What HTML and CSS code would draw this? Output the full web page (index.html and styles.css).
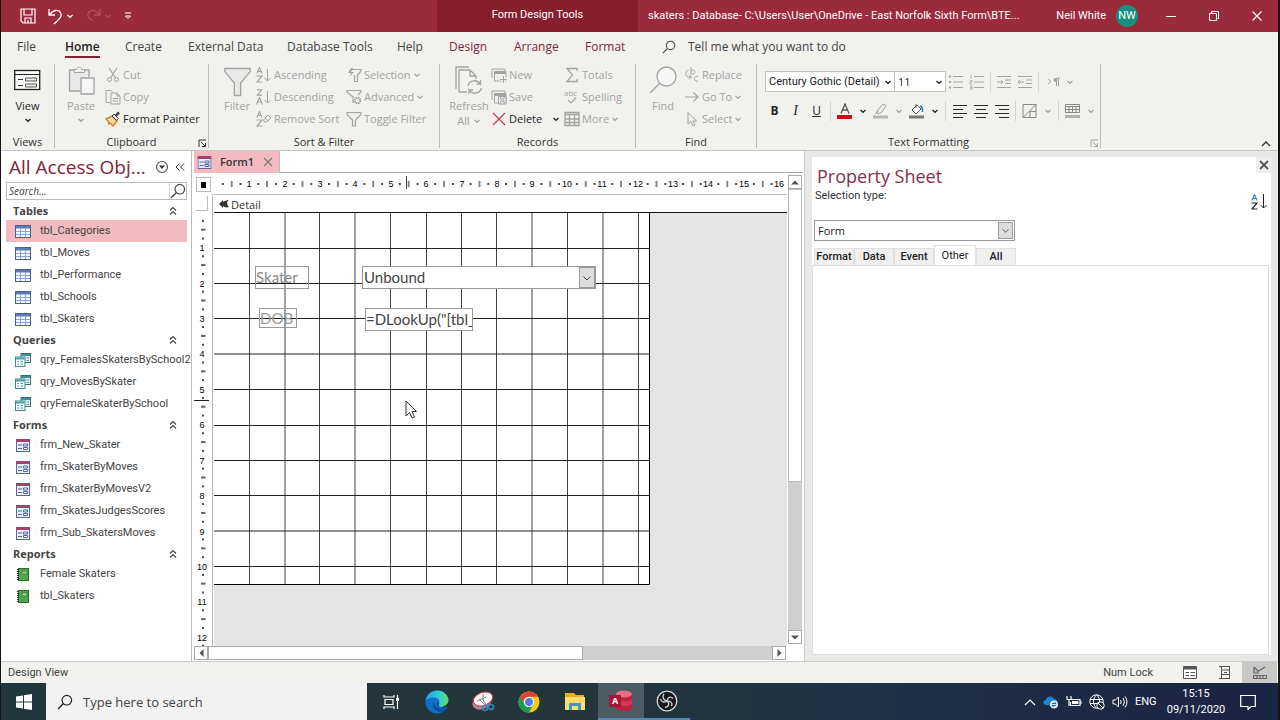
FILE: index.html
```html
<!DOCTYPE html>
<html lang="en">
<head>
<meta charset="utf-8">
<title>skaters : Database</title>
<link rel="stylesheet" href="styles.css">
</head>
<body>
<svg class="defs" aria-hidden="true">
  <symbol id="chev" viewBox="0 0 8 8"><path d="M1.500 3 4 5.300 6.500 3" fill="none" stroke="currentColor" stroke-width="1.300"/></symbol>
  <symbol id="fold" viewBox="0 0 8 10"><path d="M1 4.500 4 1.500 7 4.500M1 8.500 4 5.500 7 8.500" fill="none" stroke="currentColor" stroke-width="1.200"/></symbol>
  <symbol id="mag" viewBox="0 0 16 16"><path d="M6.200 9.800 1 15" fill="none" stroke="currentColor" stroke-width="1.300"/><circle cx="9.800" cy="6.200" r="4.800" fill="none" stroke="currentColor" stroke-width="1.200"/></symbol>
  <symbol id="funnel" viewBox="0 0 26 28"><path d="M.8 1H25.200V4L16 15V27H10V15L.8 4Z" fill="#e9e9e9" stroke="currentColor" stroke-width="1.300"/></symbol>
  <symbol id="funnel-small" viewBox="0 0 16 16"><path d="M1 1.500H15V3.500L9.500 9V15H6.500V9L1 3.500Z" fill="#ececec" stroke="currentColor" stroke-width="1.200"/></symbol>
  <symbol id="launch" viewBox="0 0 9 9"><path d="M1 8V1H8M3 3 7 7M7.500 4V7.500H4" fill="none" stroke="currentColor"/></symbol>
  <symbol id="table" viewBox="0 0 16 13"><rect x=".5" y=".5" width="15" height="12" fill="#f4f9ff" stroke="#47628e"/><path d="M1 1H15V3.500H1Z" fill="#5b7db4"/><path d="M1 6.500H15M1 9.500H15M5.500 3V12M10.500 3V12" stroke="#8aa7d2"/></symbol>
  <symbol id="query" viewBox="0 0 16 14"><rect x="6" y=".5" width="9.500" height="9" fill="#e9f6f5" stroke="#2e7379"/><path d="M6 1H15V3H6Z" fill="#3f9195"/><rect x=".5" y="4" width="9.500" height="9.500" fill="#eefafa" stroke="#3f8b92"/><path d="M1 4.500H9.500V6.500H1Z" fill="#4fa3a6"/><path d="M2.500 8.500H4M5.500 8.500H8M2.500 11H4M5.500 11H8M11.500 5H14M11.500 7.500H14" stroke="#5d8fa9"/></symbol>
  <symbol id="form" viewBox="0 0 14 13"><rect x=".5" y=".5" width="13" height="12" fill="#e4edfa" stroke="#5a6796"/><path d="M0 0H14V3H0Z" fill="#a8406c"/><path d="M2 6H6M2 9.500H6" stroke="#56658f"/><path d="M7.500 5H11.500V7H7.500ZM7.500 8.500H11.500V10.500H7.500Z" fill="#fff" stroke="#4b66a8"/></symbol>
  <symbol id="report" viewBox="0 0 12 13"><rect x="1.500" y=".5" width="10" height="12" fill="#4fa64c" stroke="#2d6b32"/><rect x="5" y="3" width="5" height="3" fill="#9bd38e" stroke="#3c803d" stroke-width=".8"/><path d="M1 1V13" stroke="#333" stroke-width="2" stroke-dasharray="1 1"/></symbol>
  <symbol id="sheets" viewBox="0 0 16 14"><path d="M1 10V1H14V3M3.500 12V3.500H15V13H3.500Z" fill="#eee" stroke="currentColor"/><path d="M3.500 5H15" stroke="currentColor" stroke-width="2"/></symbol>
  <symbol id="glyph-a" viewBox="0 0 7 8"><path d="M.5 7.500 3.500.5 6.500 7.500M1.500 5H5.500" fill="none" stroke="currentColor" stroke-width="1.200"/></symbol>
  <symbol id="glyph-z" viewBox="0 0 7 8"><path d="M.5 1H6L1 7H6.500" fill="none" stroke="currentColor" stroke-width="1.200"/></symbol>
</svg>

<header class="titlebar">
  <div class="quick">
    <button aria-label="Save"><svg width="16" height="16"><path d="M1 1H15V15H3L1 13ZM4 1V7H12V1M5 15V10H11V15M8 12V15" fill="none" stroke="currentColor" stroke-width="1.200"/></svg></button>
    <button aria-label="Undo"><svg width="15" height="17"><path d="M1 1V7H7M1.500 6.500C5 2 10 1 12.500 4.500 15 8.500 11 11 6 16" fill="none" stroke="currentColor" stroke-width="1.300"/></svg><svg width="8" height="8"><use href="#chev"/></svg></button>
    <button class="faded" aria-label="Redo" disabled><svg width="15" height="17"><path d="M14 1V7H8M13.500 6.500C10 2 5 1 2.500 4.500 0 8.500 4 11 7 13" fill="none" stroke="currentColor" stroke-width="1.300"/></svg><svg width="8" height="8"><use href="#chev"/></svg></button>
    <button aria-label="Customize toolbar"><svg width="8" height="8"><path d="M1 1H7M1.500 4 4 6.500 6.500 4Z" fill="none" stroke="currentColor"/></svg></button>
  </div>
  <div class="context">Form Design Tools</div>
  <h1 class="doc">skaters : Database- C:\Users\User\OneDrive - East Norfolk Sixth Form\BTE...</h1>
  <div class="user"><span>Neil White</span><span class="avatar">NW</span></div>
  <div class="winbtns">
    <button aria-label="Minimize"><svg width="10" height="10"><path d="M0 5.500H10" stroke="currentColor"/></svg></button>
    <button aria-label="Restore"><svg width="10" height="10"><path d="M.5 2.500H7.500V9.500H.5ZM2.500 2V.5H9.500V7.500H8" fill="none" stroke="currentColor"/></svg></button>
    <button aria-label="Close"><svg width="10" height="10"><path d="M.5.5 9.500 9.500M9.500.5.5 9.500" stroke="currentColor" stroke-width="1.200"/></svg></button>
  </div>
</header>

<nav class="tabs">
  <button>File</button><button class="current"><span>Home</span></button><button>Create</button><button>External Data</button><button>Database Tools</button><button>Help</button><button class="tool">Design</button><button class="tool">Arrange</button><button class="tool">Format</button>
  <button class="tell"><svg width="14" height="14" viewBox="0 0 16 16"><use href="#mag"/></svg><span>Tell me what you want to do</span></button>
</nav>

<section class="ribbon">
  <div class="group g-views">
    <div class="cmds"><button class="big on"><svg width="27" height="28"><rect x=".7" y="4.500" width="25" height="19" fill="#fff" stroke="#222" stroke-width="1.300"/><path d="M1 8.500H26" stroke="#222"/><path d="M4 13.500H9M4 19.500H9" stroke="#333"/><path d="M11.500 12H22.500V15H11.500ZM11.500 18H22.500V21H11.500Z" fill="#eee" stroke="#555"/></svg><span>View</span><svg class="drop" width="8" height="8"><use href="#chev"/></svg></button></div>
    <h2>Views</h2>
  </div>
  <div class="group g-clip">
    <div class="cmds">
      <button class="big" disabled><svg width="27" height="29"><path d="M12 25H1.500V4H21V11" fill="#e9e9e9" stroke="currentColor" stroke-width="1.300"/><path d="M6 6.500V3.500H8.500C9 .5 13.500.5 14 3.500H16.500V6.500Z" fill="#f1f1ee" stroke="currentColor"/><path d="M13 12H26V28H13Z" fill="#f6f6f6" stroke="currentColor" stroke-width="1.300"/></svg><span>Paste</span><svg class="drop" width="8" height="8"><use href="#chev"/></svg></button>
      <div class="stack">
        <button disabled><svg width="16" height="16"><path d="M4 1 10.500 11M12 1 5.500 11" fill="none" stroke="currentColor" stroke-width="1.200"/><circle cx="4.500" cy="12.500" r="2" fill="none" stroke="currentColor"/><circle cx="11.500" cy="12.500" r="2" fill="none" stroke="currentColor"/></svg>Cut</button>
        <button disabled><svg width="16" height="16"><path d="M5 13.500H1V1.500H6L8 3.500M6 4H12L15 7V15H6Z M12 4V7H15M8 9.500H13M8 12H13" fill="none" stroke="currentColor"/></svg>Copy</button>
        <button class="on"><svg width="16" height="16"><path d="M1 8 7 5 12 10 8 15 5 12 4 13 3 10Z" fill="#f7d9a8" stroke="#d9801f" stroke-width="1.400"/><path d="M7 5 9 3 13.500 7.500 11.500 9.500Z" fill="#ddd" stroke="#444"/><path d="M11 4.500 14 1.500" stroke="#444" stroke-width="2.500"/></svg>Format Painter</button>
      </div>
    </div>
    <h2>Clipboard</h2><button class="launcher" aria-label="Clipboard options"><svg width="9" height="9"><use href="#launch"/></svg></button>
  </div>
  <div class="group g-sort">
    <div class="cmds">
      <button class="big" disabled><svg width="27" height="28"><use href="#funnel"/></svg><span>Filter</span></button>
      <div class="stack">
        <button disabled><svg width="16" height="16"><use href="#glyph-a" width="7" height="7"/><use href="#glyph-z" y="8" width="7" height="8"/><path d="M11.500 2V14M8.500 11 11.500 14 14.500 11" fill="none" stroke="currentColor"/></svg>Ascending</button>
        <button disabled><svg width="16" height="16"><use href="#glyph-z" width="7" height="7"/><use href="#glyph-a" y="8" width="7" height="8"/><path d="M11.500 2V14M8.500 11 11.500 14 14.500 11" fill="none" stroke="currentColor"/></svg>Descending</button>
        <button disabled><svg width="16" height="16"><use href="#glyph-a" width="7" height="7"/><use href="#glyph-z" y="8" width="7" height="8"/><path d="M7.500 9 12 4 15 7 10.500 11H8.500ZM9.500 7 12 10" fill="none" stroke="currentColor"/></svg>Remove Sort</button>
      </div>
      <div class="stack">
        <button disabled><svg width="16" height="16"><path d="M6 2.500H15V4L11.500 8V14.500H8.500V8" fill="none" stroke="currentColor" stroke-width="1.200"/><path d="M5 1 2 6H5L3 10 8 5H5L7 1Z" fill="currentColor"/></svg>Selection<svg width="8" height="8"><use href="#chev"/></svg></button>
        <button disabled><svg width="16" height="16"><path d="M7 14V8L1 3V1.500H15V3L12 6" fill="none" stroke="currentColor" stroke-width="1.200"/><circle cx="11.500" cy="11.500" r="2.800" fill="none" stroke="currentColor" stroke-width="2" stroke-dasharray="1.600 .6"/></svg>Advanced<svg width="8" height="8"><use href="#chev"/></svg></button>
        <button disabled><svg width="16" height="16"><use href="#funnel-small"/></svg>Toggle Filter</button>
      </div>
    </div>
    <h2>Sort &amp; Filter</h2>
  </div>
  <div class="group g-rec">
    <div class="cmds">
      <button class="big" disabled><svg width="28" height="29"><path d="M1 23V1H14M4 26V4H15L21 10V13M15 4V10H21M4 26H12" fill="none" stroke="currentColor" stroke-width="1.300"/><path d="M13 20C14 14 22 13 25.500 18V14M25.500 18H21.500M26.500 22C25 28 17 29 14 24V28M14 24H18" fill="none" stroke="currentColor" stroke-width="1.300"/></svg><span>Refresh</span><span class="inl">All<svg width="8" height="8"><use href="#chev"/></svg></span></button>
      <div class="stack">
        <button disabled><svg width="16" height="16"><use href="#sheets"/><path d="M12.500 8V16M8.500 12H16" stroke="#f1f1ee" stroke-width="3"/><path d="M12.500 9V16M9 12.500H16" stroke="currentColor"/></svg>New</button>
        <button disabled><svg width="16" height="16"><use href="#sheets"/><path d="M7.500 7.500H15V15H7.500ZM9.500 15V12H13V15M9.500 8V10H13V8" fill="#eee" stroke="currentColor"/></svg>Save</button>
        <button class="on"><svg width="16" height="16"><path d="M2 2 14 14M14 2 2 14" stroke="#cc4257" stroke-width="1.400"/></svg>Delete<svg class="wide" width="8" height="8"><use href="#chev"/></svg></button>
      </div>
      <div class="stack">
        <button disabled><svg width="16" height="16"><path d="M13 4V1.500H3L8.500 8 3 14.500H13V12" fill="none" stroke="currentColor" stroke-width="1.300"/></svg>Totals</button>
        <button disabled><svg width="16" height="16"><text class="mark" x="0" y="7">abc</text><path d="M4 11 7 14 12 8.500" fill="none" stroke="currentColor" stroke-width="1.200"/></svg>Spelling</button>
        <button disabled><svg width="16" height="16"><path d="M1 1.500H15V14.500H1ZM1 3.500H15M1 8H15M1 11.500H15M5.500 4V14M10.500 4V14" fill="none" stroke="currentColor" stroke-width="1.300"/></svg>More<svg width="8" height="8"><use href="#chev"/></svg></button>
      </div>
    </div>
    <h2>Records</h2>
  </div>
  <div class="group g-find">
    <div class="cmds">
      <button class="big" disabled><svg width="28" height="28"><path d="M10.500 17.500 1 27" stroke="currentColor" stroke-width="1.400"/><circle cx="17.500" cy="10.500" r="9.500" fill="#f5f5f5" stroke="currentColor" stroke-width="1.300"/></svg><span>Find</span></button>
      <div class="stack">
        <button disabled><svg width="16" height="16"><path d="M7 0V7H8.500A2 2 0 1 0 7 4.500M14 9.500A2.500 2.500 0 1 0 14 14" fill="none" stroke="currentColor"/><path d="M5 3C1 3 1 9 4 10H7M5 7.500 7.500 10 5 12.500" fill="none" stroke="currentColor"/></svg>Replace</button>
        <button disabled><svg width="16" height="16"><path d="M1 8H14M9.500 3.500 14 8 9.500 12.500" fill="none" stroke="currentColor" stroke-width="1.200"/></svg>Go To<svg width="8" height="8"><use href="#chev"/></svg></button>
        <button disabled><svg width="16" height="16"><path d="M4 1.500V13L7 10.500 9 15 11 14 9 10H12.500Z" fill="none" stroke="currentColor"/></svg>Select<svg width="8" height="8"><use href="#chev"/></svg></button>
      </div>
    </div>
    <h2>Find</h2>
  </div>
  <div class="group g-text">
    <div class="lines">
      <div class="line">
        <label class="pick font"><select aria-label="Font"><option>Century Gothic (Detail)</option></select><svg width="8" height="8"><use href="#chev"/></svg></label>
        <label class="pick size"><select aria-label="Font size"><option>11</option></select><svg width="8" height="8"><use href="#chev"/></svg></label>
        <div class="fmt lists">
          <button disabled aria-label="Bullets"><svg width="16" height="16"><path d="M5 2.500H15M5 8H15M5 13.500H15" stroke="currentColor"/><path d="M1 2.500H3M1 8H3M1 13.500H3" stroke="currentColor" stroke-width="2"/></svg></button>
          <button disabled aria-label="Numbering"><svg width="16" height="16"><path d="M5 2.500H15M5 8H15M5 13.500H15" stroke="currentColor"/><path d="M2 .5V4.500M1 6.500H3V8H1V10H3M1 12H3V15H1M1 13.500H3" fill="none" stroke="currentColor" stroke-width=".8"/></svg></button>
          <i></i>
          <button disabled aria-label="Increase indent"><svg width="16" height="16"><path d="M1 2.500H15M9 6H15M9 9.500H15M1 13.500H15M1 8H7M5 6 7 8 5 10" fill="none" stroke="currentColor"/></svg></button>
          <button disabled aria-label="Decrease indent"><svg width="16" height="16"><path d="M1 2.500H15M9 6H15M9 9.500H15M1 13.500H15M1 8H7M3 6 1 8 3 10" fill="none" stroke="currentColor"/></svg></button>
          <i></i>
          <button class="dir" disabled aria-label="Text direction"><svg width="14" height="12"><path d="M1 3 4 5.500 1 8M9.500 10V2H13M11.500 2V10" fill="none" stroke="currentColor"/><circle cx="8.500" cy="4" r="2" fill="currentColor"/></svg><svg width="8" height="8"><use href="#chev"/></svg></button>
        </div>
      </div>
      <div class="line fmt second">
        <button class="on b" aria-label="Bold">B</button><button class="on it" aria-label="Italic">I</button><button class="on u" aria-label="Underline">U</button><i></i>
        <button class="on" aria-label="Font color"><svg width="16" height="16"><path d="M4 10.500 8 1 12 10.500M5.500 7H10.500" fill="none" stroke="#555" stroke-width="1.300"/><path d="M0 12H15V16H0Z" fill="#cc1014"/></svg><svg width="8" height="8"><use href="#chev"/></svg></button>
        <button disabled aria-label="Highlight"><svg width="16" height="16"><path d="M4 8 10 1 13 2.500 9 9 5 11ZM2 11 5 8" fill="#eee" stroke="currentColor"/><path d="M0 12.500H15V15.500H0Z" fill="#b5b5b5"/></svg><svg width="8" height="8"><use href="#chev"/></svg></button>
        <button class="on" aria-label="Fill color"><svg width="16" height="16"><path d="M3 7 8 2 12 6 7 11ZM7 1V5" fill="#fff" stroke="#555"/><path d="M11 3C14 4 13.500 7 13.500 9" fill="none" stroke="#3778bd" stroke-width="1.600"/><path d="M0 12.500H15V15.500H0Z" fill="#777"/></svg><svg width="8" height="8"><use href="#chev"/></svg></button><i></i>
        <button class="on" aria-label="Align left"><svg width="14" height="16"><path d="M0 2.500H14M0 6.500H10M0 10.500H14M0 14.500H10" stroke="currentColor" stroke-width="1.200"/></svg></button>
        <button class="on" aria-label="Center"><svg width="14" height="16"><path d="M0 2.500H14M2 6.500H12M0 10.500H14M2 14.500H12" stroke="currentColor" stroke-width="1.200"/></svg></button>
        <button class="on" aria-label="Align right"><svg width="14" height="16"><path d="M0 2.500H14M4 6.500H14M0 10.500H14M4 14.500H14" stroke="currentColor" stroke-width="1.200"/></svg></button><i></i>
        <button disabled aria-label="Gridlines"><svg width="16" height="16"><path d="M1 1.500H14V14.500H1ZM1 14.500 14 1.500M8 8.500H14M8 8.500V14" fill="none" stroke="#888"/></svg><svg width="8" height="8"><use href="#chev"/></svg></button><i></i>
        <button disabled aria-label="Alternate row color"><svg width="16" height="16"><path d="M.5 1.500H14.500V9.500H.5ZM.5 3.500H14.500M.5 6.500H14.500M4 3V9M7.500 3V9M11 3V9" fill="none" stroke="#888"/><path d="M0 12H15V15H0Z" fill="#b0b0b0"/></svg><svg width="8" height="8"><use href="#chev"/></svg></button>
      </div>
    </div>
    <h2>Text Formatting</h2><button class="launcher" aria-label="Text formatting options" disabled><svg width="9" height="9"><use href="#launch"/></svg></button>
  </div>
  <button class="collapse" aria-label="Collapse ribbon"><svg width="10" height="8"><path d="M1 6 5 2 9 6" fill="none" stroke="currentColor" stroke-width="1.300"/></svg></button>
</section>

<main class="work">
  <aside class="objects">
    <div class="objhead"><h2>All Access Obj...</h2>
      <button aria-label="Filter objects"><svg width="14" height="14"><circle cx="7" cy="7" r="5.500" fill="none" stroke="#555" stroke-width="1.200"/><path d="M4 5.500H10L7 9Z" fill="#333"/></svg></button>
      <button aria-label="Collapse pane"><svg width="10" height="10"><path d="M4.500 1.500 1 5 4.500 8.500M9 1.500 5.500 5 9 8.500" fill="none" stroke="#333"/></svg></button></div>
    <div class="find"><input type="text" placeholder="Search..." aria-label="Search objects"><button aria-label="Search"><svg width="16" height="16"><use href="#mag"/></svg></button></div>
    <h3>Tables<svg width="8" height="10"><use href="#fold"/></svg></h3>
    <ul>
      <li class="sel"><svg width="16" height="13"><use href="#table"/></svg>tbl_Categories</li>
      <li><svg width="16" height="13"><use href="#table"/></svg>tbl_Moves</li>
      <li><svg width="16" height="13"><use href="#table"/></svg>tbl_Performance</li>
      <li><svg width="16" height="13"><use href="#table"/></svg>tbl_Schools</li>
      <li><svg width="16" height="13"><use href="#table"/></svg>tbl_Skaters</li>
    </ul>
    <h3>Queries<svg width="8" height="10"><use href="#fold"/></svg></h3>
    <ul>
      <li><svg width="16" height="14"><use href="#query"/></svg>qry_FemalesSkatersBySchool2</li>
      <li><svg width="16" height="14"><use href="#query"/></svg>qry_MovesBySkater</li>
      <li><svg width="16" height="14"><use href="#query"/></svg>qryFemaleSkaterBySchool</li>
    </ul>
    <h3>Forms<svg width="8" height="10"><use href="#fold"/></svg></h3>
    <ul>
      <li><svg width="14" height="13"><use href="#form"/></svg>frm_New_Skater</li>
      <li><svg width="14" height="13"><use href="#form"/></svg>frm_SkaterByMoves</li>
      <li><svg width="14" height="13"><use href="#form"/></svg>frm_SkaterByMovesV2</li>
      <li><svg width="14" height="13"><use href="#form"/></svg>frm_SkatesJudgesScores</li>
      <li><svg width="14" height="13"><use href="#form"/></svg>frm_Sub_SkatersMoves</li>
    </ul>
    <h3>Reports<svg width="8" height="10"><use href="#fold"/></svg></h3>
    <ul>
      <li><svg width="12" height="13"><use href="#report"/></svg>Female Skaters</li>
      <li><svg width="12" height="13"><use href="#report"/></svg>tbl_Skaters</li>
    </ul>
  </aside>

  <section class="designer">
    <div class="doctabs"><button class="doctab"><svg width="15" height="13" viewBox="0 0 14 13"><use href="#form"/></svg><span>Form1</span><svg width="12" height="12"><path d="M2 2 10 10M10 2 2 10" stroke="#777" stroke-width="1.200"/></svg></button></div>
    <div class="corner"><span></span></div>
    <svg class="hruler" height="16">
      <defs><pattern id="ht" x="0" y="0" width="35.400" height="16" patternUnits="userSpaceOnUse"><path d="M8.800 7V9M26.500 7V9" stroke="#111" stroke-width="1.500"/><path d="M17.700 5V11" stroke="#333" stroke-width="1.200"/></pattern></defs>
      <rect width="100%" height="16" fill="url(#ht)"/>
      <g class="nums"><text x="35" y="11">1</text><text x="71" y="11">2</text><text x="106" y="11">3</text><text x="141" y="11">4</text><text x="177" y="11">5</text><text x="212" y="11">6</text><text x="248" y="11">7</text><text x="283" y="11">8</text><text x="318" y="11">9</text><text x="353" y="11">10</text><text x="388" y="11">11</text><text x="424" y="11">12</text><text x="459" y="11">13</text><text x="494" y="11">14</text><text x="530" y="11">15</text><text x="565" y="11">16</text></g>
      <path d="M192.500 0V13" stroke="#444"/>
    </svg>
    <svg class="vruler" width="19">
      <defs><pattern id="vt" x="0" y="18" width="19" height="35.400" patternUnits="userSpaceOnUse"><path d="M8 8.800H10M8 26.500H10" stroke="#111" stroke-width="1.500"/><path d="M7 17.700H11.500" stroke="#111" stroke-width="1.300"/></pattern></defs>
      <rect y="18" width="19" height="100%" fill="url(#vt)"/>
      <path d="M2 16.500H13.500V2" fill="none" stroke="#bbb"/>
      <g class="nums"><text x="8" y="57">1</text><text x="8" y="93">2</text><text x="8" y="128">3</text><text x="8" y="163">4</text><text x="8" y="199">5</text><text x="8" y="234">6</text><text x="8" y="270">7</text><text x="8" y="305">8</text><text x="8" y="341">9</text><text x="8" y="376">10</text><text x="8" y="411">11</text><text x="8" y="447">12</text></g>
      <path d="M0 206.500H15" stroke="#222"/>
    </svg>
    <div class="sheet">
      <div class="band"><svg width="10" height="9"><path d="M0 4 4 0V2C5 1 8 0 10 0 7 2 8 5 10 7 7 8 5 7 4 6V8Z" fill="#333"/></svg>Detail</div>
      <div class="canvas">
        <div class="page">
          <svg class="grid" width="436" height="372">
            <path d="M35.500 0V371M71 0V371M105.500 0V371M141 0V371M176.500 0V371M212.500 0V371M247.500 0V371M282.500 0V371M318 0V371M353.500 0V371M389 0V371M424.500 0V371" stroke="#444"/>
            <path d="M0 35.500H436M0 70.500H436M0 105.500H436M0 141H436M0 176.500H436M0 212.500H436M0 247.500H436M0 282.500H436M0 318H436M0 353.500H436" stroke="#222"/>
            <path d="M435.500 0V371.500H0" fill="none" stroke="#000"/>
          </svg>
          <div class="ctl lbl-skater">Skater</div>
          <div class="ctl combo">Unbound<button aria-label="Open list"><svg width="12" height="12" viewBox="0 0 12 12"><path d="M2.500 4.500 6 8 9.500 4.500" fill="none" stroke="currentColor"/></svg></button></div>
          <div class="ctl lbl-dob">DOB</div>
          <div class="ctl lookup">=DLookUp("[tbl_</div>
          <svg class="pointer" width="12" height="19"><path d="M1 1V16L4.500 12.500 7 18 9.500 17 7 11.500H11.500Z" fill="#fff" stroke="#333"/></svg>
        </div>
      </div>
    </div>
    <div class="vscroll"><button aria-label="Scroll up"><svg width="8" height="5"><path d="M0 4.500 4 .5 8 4.500Z" fill="#555"/></svg></button><span class="thumb"></span><button aria-label="Scroll down"><svg width="8" height="5"><path d="M0 .5H8L4 4.500Z" fill="#555"/></svg></button></div>
    <div class="hscroll"><button aria-label="Scroll left"><svg width="5" height="8"><path d="M4.500 0V8L.5 4Z" fill="#555"/></svg></button><span class="thumb"></span><button aria-label="Scroll right"><svg width="5" height="8"><path d="M.5 0V8L4.500 4Z" fill="#555"/></svg></button></div>
  </section>

  <aside class="props">
    <div class="prophead"><h2>Property Sheet</h2><button aria-label="Close property sheet"><svg width="12" height="12"><path d="M2 2 10 10M10 2 2 10" stroke="#555" stroke-width="1.800"/></svg></button></div>
    <div class="seltype"><span>Selection type:</span><button aria-label="Sort"><svg width="16" height="16"><use class="blue" href="#glyph-a" width="7" height="7"/><use href="#glyph-z" y="8" width="7" height="8"/><path d="M12.500 0V14M9.500 11 12.500 14 15.500 11" fill="none" stroke="#222"/></svg></button></div>
    <label class="pick selection"><select aria-label="Selection"><option>Form</option></select><svg width="15" height="17" viewBox="0 0 15 17"><path d="M4 7 7.500 10.500 11 7" fill="none" stroke="#444"/></svg></label>
    <div class="proptabs"><button>Format</button><button>Data</button><button>Event</button><button class="open">Other</button><button>All</button></div>
    <div class="propbody"></div>
  </aside>
</main>

<footer class="status"><span>Design View</span><span class="lock">Num Lock</span>
  <button aria-label="Form view"><svg width="14" height="13"><path d="M.5.5H13.500V12.500H.5Z" fill="#fff" stroke="#555"/><path d="M1 2H13" stroke="#555" stroke-width="3"/><path d="M2.500 6.500H6M2.500 9.500H6M7.500 6.500H12M7.500 9.500H12" stroke="#555"/></svg></button>
  <button aria-label="Layout view"><svg width="12" height="13"><path d="M0 .5H11M0 12.500H11M2.500 1V12M10.500 1V12M3 4H10M3 8.500H10M5 6.500H8" fill="none" stroke="#555"/></svg></button>
  <button class="active" aria-label="Design view"><svg width="14" height="13"><path d="M1 1V7H6M4 6 12 1M.5 9.500H13.500V12.500H.5ZM4 10V12M7 10V12M10 10V12M1 1 5 5" fill="none" stroke="#666" stroke-width="1.200"/></svg></button>
</footer>

<footer class="taskbar">
  <button class="start" aria-label="Start"><svg width="16" height="16"><path d="M0 2.500 7 1.500V7.500H0ZM8 1.300 16 0V7.500H8ZM0 8.500H7V14.500L0 13.500ZM8 8.500H16V16L8 14.700Z" fill="#fff"/></svg></button>
  <div class="tsearch"><svg width="16" height="16"><use href="#mag"/></svg><input type="text" placeholder="Type here to search" aria-label="Type here to search"></div>
  <button class="views" aria-label="Task View"><svg width="16" height="14"><path d="M1 0V2H11V0M1 14V12H11V14M2 4.500H10V9.500H2ZM14.500 0V14" fill="none" stroke="#fff" stroke-width="1.200"/><path d="M13 3H16V6H13Z" fill="#fff"/></svg></button>
  <button aria-label="Edge"><svg width="24" height="24" viewBox="0 0 24 24"><defs><linearGradient id="eg" x2="1"><stop stop-color="#1f9fe4"/><stop offset=".6" stop-color="#32cdd5"/><stop offset="1" stop-color="#63db63"/></linearGradient></defs><circle cx="12" cy="12" r="11.500" fill="#0f6fc6"/><path d="M.6 11C1.500 4 7 .5 12 .5 19 .5 23.500 5.500 23.500 10.500 23.500 15 20 17 16.500 17 14 17 13 15.500 14 14 16 10 12 7.500 8.500 7.500 5 7.500 2 9 .6 11Z" fill="url(#eg)"/><path d="M9 12C6 17 11 22 16 22.500 19 21.500 21 20 22 17.500 17 20 10 19 9 12Z" fill="#0c4f9f"/><path d="M13 12C11 16 15 19 21 17L24 17C25 14 24 10 24 10 23 15 18 17 16.500 17 14 17 13 15.500 14 14Z" fill="#22363f"/></svg></button>
  <button aria-label="Snipping tool"><svg width="24" height="22"><ellipse cx="11" cy="11" rx="10" ry="7" transform="rotate(-25 11 11)" fill="#b98790"/><ellipse cx="12" cy="8" rx="10" ry="6.500" transform="rotate(-20 12 8)" fill="#f5f5f7" stroke="#c9354d"/><path d="M6 10 15 6M12 3V9L16 15M8 8 14 14" stroke="#888" fill="none"/><circle cx="14" cy="17" r="2.500" fill="none" stroke="#3786b8" stroke-width="1.500"/><circle cx="20" cy="16" r="2.500" fill="none" stroke="#3786b8" stroke-width="1.500"/></svg></button>
  <button aria-label="Chrome"><svg width="22" height="22" viewBox="0 0 22 22"><circle cx="11" cy="11" r="10.500" fill="#fbc719"/><path d="M1.900 5.700A10.500 10.500 0 0 1 20 5.700H11A5 5 0 0 0 6.500 13.500Z" fill="#dc4437"/><path d="M1.900 5.700A10.500 10.500 0 0 0 11 21.500L15.400 13.500A5 5 0 0 1 6.500 13.500Z" fill="#179d59"/><circle cx="11" cy="11" r="5" fill="#fff"/><circle cx="11" cy="11" r="3.900" fill="#467fe9"/></svg></button>
  <button aria-label="File Explorer"><svg width="22" height="20"><path d="M1 1H10L12 3H20V17H1Z" fill="#e8ae27"/><path d="M1 5H21V18H1Z" fill="#fbdc70"/><path d="M5 11H17V18H14V14H8V18H5Z" fill="#4295cc"/></svg></button>
  <button class="running" aria-label="Access"><svg width="24" height="22"><path d="M7 3V18C9 22 22 22 23 18V3Z" fill="#b9213f"/><path d="M7 9C12 12 19 12 23 9V14C19 17 12 17 7 14Z" fill="#cf3755"/><ellipse cx="15" cy="4" rx="8" ry="3.500" fill="#e66d87"/><rect x="0" y="5" width="12" height="12" rx="1" fill="#a91535"/><text class="acc" x="6" y="14">A</text></svg></button>
  <button class="under" aria-label="OBS"><svg width="22" height="22"><circle cx="11" cy="11" r="9.800" fill="#181a1e" stroke="#d8dadc" stroke-width="1.300"/><path d="M11 11C7 10 6 7 8 4M11 11C11.500 7 14.500 6 17 8.500M11 11C14 13.500 13 17 9 17.500M11 11C8 13 5 12 4.500 9M11 11C15 11 17 13 15.500 16" fill="none" stroke="#c9cbce" stroke-width="1.400"/></svg></button>
  <div class="tray">
    <svg width="12" height="8"><path d="M1 7 6 2 11 7" fill="none" stroke="#fff" stroke-width="1.200"/></svg>
    <svg width="16" height="14"><path d="M3 10C-1 9 0 5 3 5 4 1 9 0 11 4 14 4 15 7 14 9L10 11Z" fill="#1f83d5"/><circle cx="11" cy="9.500" r="4" fill="#d9eef9"/><path d="M9 8.500H13L11.500 7M13 10.500H9L10.500 12" fill="none" stroke="#1c6fb0"/></svg>
    <svg width="16" height="14"><path d="M5.500 4.500H14V10.500H4.500V7M1 1V4.500H5V1M3 4V11" fill="none" stroke="#fff" stroke-width="1.200"/><path d="M6 6H12.500V9H6ZM14.500 6H15.500V9H14.500Z" fill="#fff"/></svg>
    <svg width="16" height="16"><circle cx="7.500" cy="7.500" r="6.700" fill="none" stroke="#fff"/><path d="M1 5.500H14M1 9.500H9M7.500 1C3.500 4 3.500 11 7.500 14M7.500 1C10 3 10.500 5 10.500 8" fill="none" stroke="#fff"/><circle cx="11.500" cy="11.500" r="3.700" fill="#1c3041" stroke="#fff"/><path d="M9 9 14 14" stroke="#fff"/></svg>
    <svg width="16" height="14"><path d="M1 5V9H3.500L6.500 12V2L3.500 5ZM8.500 5Q10 7 8.500 9M11 3Q14 7 11 11M13 1.500Q17 7 13 12.500" fill="none" stroke="#fff"/></svg>
    <span class="lang">ENG</span>
    <div class="clock"><span>15:15</span><span>09/11/2020</span></div>
    <svg width="16" height="16"><path d="M.7 1.500H15.300V12.500H11L8 15.500V12.500H.7Z" fill="none" stroke="#fff" stroke-width="1.200"/></svg>
  </div>
</footer>
</body>
</html>
```
FILE: styles.css
```css
* { box-sizing: border-box; }
body { margin: 0; min-height: 100vh; display: flex; flex-direction: column; background: #e8e8e6; color: #333; font: 11px/16px "Open Sans", "Noto Sans", sans-serif; border-left: 1px solid #151515; border-right: 2px solid #151515; }
button { margin: 0; padding: 0; border: 0; background: none; font: inherit; color: inherit; display: flex; align-items: center; justify-content: center; white-space: nowrap; }
h1, h2, h3, ul { margin: 0; padding: 0; font-weight: 400; font-size: 11px; list-style: none; }
svg { flex: none; }
select, input { font: inherit; color: inherit; border: 0; padding: 0; background: none; border-radius: 0; min-width: 0; outline: 0; }
select { appearance: none; width: 100%; }
.defs { position: absolute; width: 0; height: 0; }

.titlebar { display: grid; grid-template-columns: 436px 201px minmax(0, 1fr) auto auto; align-items: center; height: 32px; background: #9b2b3a; color: #fff; }
.quick { display: flex; align-items: center; gap: 12px; padding-left: 19px; }
.quick button { gap: 3px; }
.quick .faded { color: #b54c5b; }
.context { align-self: stretch; background: #871f2d; text-align: center; line-height: 30px; font-family: Roboto, sans-serif; }
.doc { padding-left: 10px; white-space: nowrap; overflow: hidden; text-overflow: ellipsis; font-family: Roboto, sans-serif; }
.user { display: flex; align-items: center; gap: 10px; font: 11px/16px Roboto, sans-serif; }
.avatar { width: 22px; height: 22px; border-radius: 50%; background: #168f80; line-height: 22px; text-align: center; }
.winbtns { display: flex; padding-left: 11px; }
.winbtns button { width: 43px; height: 32px; }

.tabs { display: grid; grid-template-columns: 48px 60px 63px 99px 110px 52px 65px 71px 77px 1fr; height: 30px; padding-left: 16px; background: #f1f1ee; font-size: 12px; color: #444; }
.tabs button { justify-content: flex-start; height: 29px; }
.tabs .current { color: #222; font-weight: 600; }
.tabs .current span { border-bottom: 2px solid #871f2d; line-height: 18px; margin-top: 2px; }
.tabs .tool { color: #85243a; }
.tabs .tell { gap: 12px; }

.ribbon { display: flex; height: 89px; padding: 2px 0; background: #f1f1ee; border-bottom: 1px solid #c6c6c4; color: #333; }
.ribbon button:disabled { color: #a3a3a3; }
.ribbon .on { color: #262626; }
.group { position: relative; display: flex; flex-direction: column; justify-content: space-between; border-right: 1px solid #bdbdbb; }
.group h2 { line-height: 12px; text-align: center; }
.launcher { position: absolute; right: 1px; bottom: 0; }
.cmds { display: grid; height: 68px; }
.big { flex-direction: column; justify-content: flex-start; padding-top: 2px; line-height: 15px; }
.big > svg:first-child { height: 32px; }
.drop { margin-top: 3px; }
.inl { display: flex; align-items: center; gap: 3px; }
.stack { display: grid; grid-auto-rows: 22px; }
.stack button { justify-content: flex-start; gap: 2px; }
.stack .wide { margin-left: 8px; }
.mark { font: 8px/8px "Open Sans", sans-serif; fill: currentColor; }
.g-views { width: 54px; }
.g-clip { width: 154px; }
.g-clip .cmds { grid-template-columns: 48px 1fr; padding-left: 2px; }
.g-sort { width: 231px; }
.g-sort .cmds { grid-template-columns: 38px 90px 1fr; padding-left: 9px; }
.g-rec { width: 196px; }
.g-rec .cmds { grid-template-columns: 44px 73px 1fr; padding-left: 7px; }
.g-find { width: 121px; }
.g-find .cmds { grid-template-columns: 42px 1fr; padding-left: 6px; }
.g-text { width: 344px; }
.lines { padding: 7px 0 0 8px; }
.line { display: flex; align-items: center; }
.pick { position: relative; display: flex; align-items: center; height: 21px; background: #fff; border: 1px solid #c4c4c2; color: #222; }
.pick select { padding-left: 3px; }
.pick svg { position: absolute; right: 2px; pointer-events: none; }
.font { width: 130px; font-family: Roboto, sans-serif; }
.size { width: 51px; border-left: 0; }
.fmt { display: flex; align-items: center; }
.lists { gap: 5px; padding-left: 2px; }
.fmt i { width: 1px; height: 20px; background: #d4d4d2; }
.dir { gap: 5px; padding-left: 3px; }
.second { height: 30px; gap: 6px; margin-top: 4px; padding-left: 2px; }
.second button { gap: 6px; height: 20px; min-width: 15px; font-size: 12px; }
.b { font-weight: 700; }
.second .it { font-style: italic; font-family: "Liberation Serif", serif; font-size: 14px; }
.u { text-decoration: underline; }
.collapse { margin-left: auto; align-self: flex-end; padding-right: 7px; }

.work { flex: 1; display: grid; grid-template-columns: 191px 613px minmax(0, 1fr); }
.objects { background: #fff; border-right: 1px solid #bbb; padding: 3px 4px 0 5px; color: #444; }
.objhead { display: flex; align-items: center; gap: 6px; height: 28px; padding: 0 2px 2px 0; }
.objhead h2 { font-size: 19px; line-height: 26px; color: #7d2638; flex: 1; padding-left: 3px; white-space: nowrap; }
.find { display: flex; width: 181px; height: 18px; margin-bottom: 1px; border: 1px solid #bbb; }
.find input { flex: 1; padding-left: 2px; font-size: 10px; font-style: italic; }
.find input::placeholder { color: #444; opacity: 1; }
.find button { width: 17px; border-left: 1px solid #ddd; }
.objects h3 { display: flex; justify-content: space-between; align-items: center; height: 19px; padding: 0 10px 0 7px; font-size: 11px; font-weight: 700; }
.objects li { display: flex; align-items: center; height: 22px; gap: 9px; padding-left: 9px; white-space: nowrap; font-family: Roboto, sans-serif; }
.objects li svg { width: 16px; }
.objects .sel { background: #f3bac1; }

.designer { display: grid; grid-template: 22px 21px minmax(0, 1fr) 15px / 20px minmax(0, 1fr) 16px; padding: 0 1px 0 2px; background: #fff; border-right: 1px solid #ccc; }
.doctabs { grid-column: 1 / -1; border-bottom: 1px solid #aaa; display: flex; }
.doctab { gap: 8px; width: 86px; height: 22px; padding-right: 2px; background: #f3bac1; font-weight: 600; border-right: 1px solid #bbb; }
.corner { margin: 4px 3px 2px 2px; border: 1px solid #bbb; display: flex; align-items: center; justify-content: center; }
.corner span { width: 5px; height: 6px; background: #000; }
.hruler { width: 100%; align-self: center; margin-top: 1px; }
.nums { font: 9px "Liberation Sans", Arial, sans-serif; text-anchor: middle; fill: #000; }
.vruler { grid-row: 3; grid-column: 1; height: 100%; border-right: 1px solid #bbb; }
.sheet { grid-row: 3; grid-column: 2; min-width: 0; display: flex; flex-direction: column; background: #e5e5e5; border-top: 1px solid #bbb; }
.band { height: 18px; display: flex; align-items: center; gap: 2px; padding: 2px 0 0 5px; background: #fff; border-bottom: 1px solid #111; flex: none; }
.canvas { flex: 1; }
.page { position: relative; width: 436px; height: 372px; background: #fff; }
.grid { position: absolute; inset: 0; }
.ctl { position: absolute; border: 1px solid #999; color: #444; font: 15px/20px Lato, "Open Sans", sans-serif; white-space: nowrap; overflow: hidden; }
.lbl-skater { left: 41px; top: 53px; width: 54px; height: 23px; color: #888; }
.lbl-dob { left: 45px; top: 95px; width: 38px; height: 20px; color: #999; line-height: 18px; }
.combo { left: 148px; top: 53px; width: 234px; height: 23px; padding-left: 1px; background: #fff; display: flex; justify-content: space-between; }
.combo button { width: 16px; background: #ddd; border: 1px solid #999; }
.lookup { left: 151px; top: 95px; width: 108px; height: 23px; background: #fff; }
.pointer { position: absolute; left: 191px; top: 187px; }
.vscroll { grid-row: 2 / 4; grid-column: 3; display: flex; flex-direction: column; background: #cfcfcf; margin: 2px 1px 2px; }
.vscroll button { height: 14px; background: #fff; border: 1px solid #aaa; }
.vscroll .thumb { flex: none; height: 293px; background: #fff; border: 1px solid #bbb; margin-bottom: auto; }
.hscroll { grid-row: 4; grid-column: 1 / 3; display: flex; background: #cfcfcf; margin: 0 1px 1px 0; }
.hscroll button { width: 14px; background: #fff; border: 1px solid #aaa; }
.hscroll .thumb { width: 375px; background: #fff; border: 1px solid #aaa; margin-right: auto; }

.props { display: flex; flex-direction: column; margin: 6px 7px 6px 7px; background: #fff; min-width: 0; }
.prophead { display: flex; justify-content: space-between; align-items: flex-start; height: 31px; padding-left: 5px; }
.prophead h2 { font-size: 18px; line-height: 38px; color: #85304a; }
.prophead button { width: 15px; height: 16px; background: #eee; }
.seltype { display: flex; justify-content: space-between; height: 32px; padding: 0 4px 0 3px; font-family: Roboto, sans-serif; }
.seltype button { align-self: flex-start; padding-top: 6px; color: #222; }
.blue { color: #2785b5; }
.selection { width: 201px; margin-left: 2px; border-color: #999; }
.selection svg { right: 1px; background: #ddd; border: 1px solid #999; }
.proptabs { display: flex; align-items: flex-end; height: 24px; padding-left: 2px; color: #222; font-family: Roboto, sans-serif; }
.proptabs button { height: 17px; width: 40px; background: #f0f0f0; border: 1px solid #e0e0e0; border-bottom: 0; font-weight: 500; }
.proptabs .open { width: 42px; height: 20px; background: #fff; font-weight: 400; }
.propbody { flex: 1; margin-right: 2px; border: 1px solid #ddd; }

.status { display: flex; align-items: center; height: 22px; background: #f1f1ee; border-top: 1px solid #ccc; padding: 0 1px 0 7px; color: #444; font-family: Roboto, sans-serif; }
.lock { margin-left: auto; margin-right: 19px; }
.status button { width: 35px; height: 21px; }
.status .active { background: #c8c8c6; }

.taskbar { display: flex; height: 37px; background: linear-gradient(90deg, #22363b 0%, #22363b 45%, #1d3046 70%, #1a2444 100%); color: #fff; }
.taskbar button { width: 46px; }
.taskbar .start { width: 45px; background: #20373b; }
.tsearch { width: 321px; display: flex; align-items: center; gap: 10px; padding-left: 11px; background: #f2f2f2; color: #222; font-size: 14px; }
.tsearch input { flex: 1; }
.tsearch input::placeholder { color: #444; opacity: 1; font-size: 13px; }
.taskbar .views { width: 47px; }
.acc { font: 700 9px "Open Sans", sans-serif; fill: #fff; text-anchor: middle; }
.taskbar .running { background: #4c5c62; border-bottom: 2px solid #5a87bb; }
.taskbar .under { border-bottom: 2px solid #5a87bb; }
.tray { margin-left: auto; display: flex; align-items: center; gap: 7px; padding-right: 22px; font-family: Roboto, sans-serif; }
.lang { width: 24px; }
.clock { display: flex; flex-direction: column; align-items: center; width: 60px; margin-right: 7px; }
```
